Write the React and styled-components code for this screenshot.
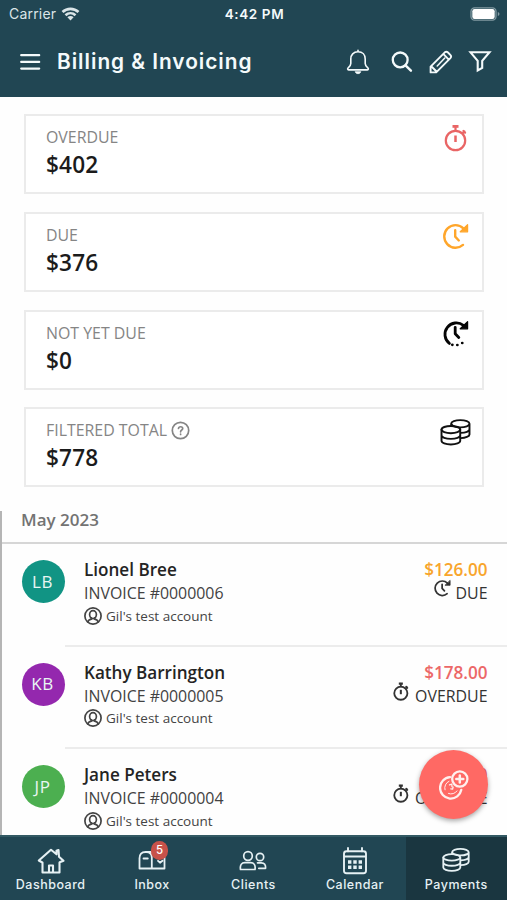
import React from 'react';
import styled, { createGlobalStyle } from 'styled-components';

const GlobalStyle = createGlobalStyle`
  * {
    box-sizing: border-box;
  }
  body {
    margin: 0;
    background: #fff;
  }
  p, h1, h2 {
    margin: 0;
  }
`;

const Screen = styled.div`
  position: relative;
  display: flex;
  flex-direction: column;
  width: 507px;
  height: 900px;
  overflow: hidden;
  background: #fefefe;
  color: #222;
  font-family: 'Open Sans', sans-serif;
`;

const Header = styled.header`
  flex: none;
  height: 97px;
  background: #214653;
  color: #f4fafb;
`;

const StatusBar = styled.div`
  display: grid;
  grid-template-columns: 1fr auto 1fr;
  align-items: center;
  height: 27px;
  padding: 0 7px 0 9px;
  font-family: Inter, sans-serif;
  font-size: 14px;
`;

const Carrier = styled.div`
  display: flex;
  align-items: center;
  gap: 5px;
  color: #dbe5e8;
  letter-spacing: 0.2px;
`;

const Clock = styled.div`
  font-size: 13.5px;
  font-weight: 600;
  letter-spacing: 0.6px;
`;

const Battery = styled.div`
  display: flex;
  justify-content: flex-end;
`;

const TitleBar = styled.div`
  display: flex;
  align-items: center;
  height: 70px;
  padding: 0 15px 0 20px;
`;

const Title = styled.h1`
  flex: 1;
  margin-left: 16px;
  font-family: Inter, sans-serif;
  font-size: 20.8px;
  font-weight: 600;
  line-height: 28px;
  letter-spacing: 0.98px;
`;

const Actions = styled.div`
  display: flex;
  align-items: center;
  gap: 15.5px;

  svg:first-child {
    margin-right: 6px;
  }
`;

const Summary = styled.section`
  flex: none;
  display: flex;
  flex-direction: column;
  gap: 17.8px;
  padding: 17px 23px 0 24px;
  height: 414px;
`;

const Card = styled.div`
  display: flex;
  justify-content: space-between;
  height: 80px;
  padding: 9px 11px 0 20px;
  border: 2px solid #ebebeb;
  background: #fff;
`;

const CardLabel = styled.p`
  display: flex;
  align-items: center;
  gap: 4px;
  height: 24px;
  color: #858585;
  font-size: 15.9px;
`;

const CardValue = styled.p`
  color: #1b1b1b;
  font-size: 22.6px;
  font-weight: 600;
  line-height: 32px;
  letter-spacing: 0.2px;
`;

const CardIcon = styled.div`
  display: flex;
  justify-content: center;
  width: 32px;
  margin-top: ${(p) => p.$top}px;
  color: ${(p) => p.$color};
`;

const List = styled.section`
  flex: 1;
  min-height: 0;
  border-left: 2px solid #b5b5b5;
`;

const Month = styled.h2`
  height: 33px;
  padding: 0 19px;
  border-bottom: 2px solid #d6d6d6;
  color: #737373;
  font-size: 17px;
  font-weight: 600;
  line-height: 18px;
`;

const Row = styled.div`
  display: flex;
  height: 102.7px;
  padding-left: 20px;
`;

const Avatar = styled.div`
  flex: none;
  display: flex;
  align-items: center;
  justify-content: center;
  width: 43px;
  height: 43px;
  margin-top: 16px;
  padding: 0 2px 1px 0;
  border-radius: 50%;
  background: ${(p) => p.$color};
  color: #e9f6f3;
  font-size: 17px;
  letter-spacing: 0.6px;
`;

const RowBody = styled.div`
  flex: 1;
  display: flex;
  justify-content: space-between;
  padding: 13px 19.5px 0 19px;
  border-bottom: 2px solid #ececec;
`;

const Name = styled.p`
  color: #242424;
  font-size: 17.1px;
  font-weight: 600;
  line-height: 25px;
`;

const Invoice = styled.p`
  color: #424242;
  font-size: 15.9px;
  line-height: 23px;
`;

const Account = styled.p`
  display: flex;
  align-items: center;
  gap: 4px;
  height: 21px;
  color: #444;
  font-size: 13.5px;
`;

const Right = styled.div`
  display: flex;
  flex-direction: column;
  align-items: flex-end;
`;

const Amount = styled.p`
  color: ${(p) => p.$color};
  font-size: 17.1px;
  font-weight: 600;
  line-height: 25px;
`;

const Status = styled.p`
  display: flex;
  gap: 5px;
  color: #333;
  font-size: 15.9px;
  line-height: 23px;

  svg {
    margin-top: -3px;
  }
`;

const Fab = styled.button`
  position: absolute;
  right: 19px;
  bottom: 81px;
  display: flex;
  align-items: center;
  justify-content: center;
  width: 69px;
  height: 69px;
  padding: 0;
  border: 0;
  border-radius: 50%;
  background: #ff6964;
  box-shadow: 0 2px 5px rgba(0, 0, 0, 0.35);
  color: #fff0ee;
`;

const Nav = styled.nav`
  position: relative;
  flex: none;
  display: grid;
  grid-template-columns: repeat(4, 101.4px) 1fr;
  height: 65px;
  border-top: 2px solid #335a64;
  background: #214653;
`;

const NavItem = styled.a`
  display: flex;
  flex-direction: column;
  align-items: center;
  padding: 9px 0 0;
  background: ${(p) => (p.$active ? '#1a3640' : 'transparent')};
  color: #e6f1f4;
  font-family: Inter, sans-serif;
  font-size: 12.5px;
  font-weight: 500;
  line-height: 18px;
  letter-spacing: 0.5px;
`;

const NavIcon = styled.div`
  position: relative;
  height: 30px;
  padding-top: 1px;
`;

const Badge = styled.span`
  position: absolute;
  top: -5px;
  right: -2px;
  width: 17px;
  height: 19px;
  border-radius: 9px;
  background: #c8524a;
  color: #fff;
  font-size: 11.5px;
  line-height: 19px;
  letter-spacing: 0;
  text-align: center;
`;

const Svg = ({ w = 30, h = w, box = `0 0 ${w} ${h}`, sw = 2, children }) => (
  <svg
    width={w}
    height={h}
    viewBox={box}
    fill="none"
    stroke="currentColor"
    strokeWidth={sw}
    strokeLinecap="round"
    strokeLinejoin="round"
  >
    {children}
  </svg>
);

const WifiIcon = () => (
  <Svg w={19} h={14} sw={2.7}>
    <path d="M1.5 5C6 .8 13 .8 17.5 5M4.5 8.2c2.9-2.6 7.1-2.6 10 0" strokeLinecap="butt" />
    <path d="M6.4 10.3c1.8-1.6 4.4-1.6 6.2 0L9.5 13.5z" fill="currentColor" stroke="none" />
  </Svg>
);

const BatteryIcon = () => (
  <Svg w={30} h={14} sw={1.3}>
    <rect x="1" y="0.8" width="25" height="12.4" rx="3.6" stroke="#839ba3" />
    <rect x="2.3" y="2.1" width="22.4" height="9.8" rx="2.2" fill="#fff" stroke="none" />
    <path d="M27.8 5v4q1.7-.5 1.7-2t-1.7-2z" fill="#839ba3" stroke="none" />
  </Svg>
);

const MenuIcon = () => (
  <Svg w={21} h={18} sw={2.2}>
    <path d="M1.2 2.2h18M1.2 8.9h18M1.2 15.6h18" />
  </Svg>
);

const BellIcon = () => (
  <Svg w={24} h={26} sw={1.6}>
    <path d="M12 1.3v1.5M12 2.8c-4.6 0-7.2 3.2-7.2 7.2v4.6c0 1.7-.8 2.9-2.6 4.3-.9.8-.7 2 .4 2h18.8c1.1 0 1.3-1.2.4-2-1.8-1.4-2.6-2.6-2.6-4.3V10c0-4-2.6-7.2-7.2-7.2z" />
    <path d="M9.3 23c.5 2.3 4.9 2.3 5.4 0z" fill="currentColor" strokeWidth="0.8" />
  </Svg>
);

const SearchIcon = () => (
  <Svg w={22} h={22} sw={2.3}>
    <circle cx="9.2" cy="8.9" r="7.4" />
    <path d="M14.5 14.4l5.4 5.2" strokeWidth="2.5" />
  </Svg>
);

const PencilIcon = () => (
  <Svg w={24} h={24} sw={1.9}>
    <path d="M1.6 22.4v-5.7L15.8 2.3q1.6-1.4 3.2.2l2.5 2.6q1.3 1.5-.1 3L7.2 22.4zM14.5 4.2l5 5.2M2.5 16.5l5 5" />
    <path d="M8.2 15.9l7.600-7.900" strokeWidth="1.5" />
  </Svg>
);

const FilterIcon = () => (
  <Svg w={24} h={22} sw={2.1}>
    <path d="M2.5 1.300h19l-7.300 8.600v7l-4.500 2.600v-9.600z" strokeLinejoin="miter" />
  </Svg>
);

const StopwatchIcon = ({ size = 28, sw = 2.2 }) => (
  <Svg w={size} box="0 0 28 28" sw={sw}>
    <circle cx="14.500" cy="16.5" r="9.7" />
    <path d="M14.500 11.5v6.5" strokeWidth={sw + 0.3} strokeLinecap="butt" />
    <path d="M11.500 2.4h6" strokeWidth={sw + 0.6} strokeLinecap="butt" />
    <path d="M14.500 2.5v4M21.700 9.300l1.800-1.800M22.400 7l1.700 1.700" />
  </Svg>
);

const ClockArrowIcon = ({ size = 28, dotted, sw = 2.4 }) => (
  <Svg w={size} box="0 0 28 28" sw={sw}>
    {dotted ? (
      <>
        <path d="M8.4 24.4A11.3 11.3 0 0 1 22.4 6.3" />
        <path d="M11.3 25.8h.1M16.3 26h.1M21.2 24h.1" strokeWidth="2.7" />
      </>
    ) : (
      <path d="M22.4 6.3A11.3 11.3 0 1 0 22 22.9" />
    )}
    <path d="M26.6 2.6v7.2h-7.4z" fill="currentColor" strokeWidth="1.2" />
    <path d="M14.2 8.3v6.4l3.6 3.8" />
  </Svg>
);

const CoinsIcon = ({ w = 31, h = 27, sw = 2 }) => (
  <Svg w={w} h={h} box="0 0 32 28" sw={sw}>
    <ellipse cx="11.2" cy="11" rx="9.7" ry="3.8" />
    <path d="M1.5 11v11.5c0 2.2 4.3 3.9 9.7 3.9s9.7-1.7 9.7-3.9V11M1.500 16.800c0 2.100 4.300 3.800 9.700 3.800s9.700-1.700 9.700-3.800" />
    <path d="M11.500 7V5c0-2.100 4.200-3.800 9.500-3.800S30.500 2.900 30.500 5v11c0 2-4 3.700-9 3.800M11.800 5.400C12.500 7.300 16.300 8.700 21 8.700c5.300 0 9.500-1.600 9.500-3.700M21.500 14.400c5-.1 9-1.700 9-3.700" />
  </Svg>
);

const HelpIcon = () => (
  <Svg w={19} sw={1.7}>
    <circle cx="9.500" cy="9.500" r="8.200" />
    <path d="M7.500 7.500c.2-2.400 4.200-2.300 4.200 0 0 1.600-2.100 1.500-2.100 3.300M9.600 13.200v.2" />
  </Svg>
);

const AccountIcon = () => (
  <Svg w={18} sw={1.7}>
    <circle cx="9" cy="9" r="8.100" />
    <ellipse cx="9" cy="7.600" rx="3.400" ry="4" />
    <path d="M3.800 15c.4-1.700 1.500-2.400 3.600-2.800v-1.300M14.200 15c-.4-1.700-1.500-2.400-3.600-2.800v-1.300" />
  </Svg>
);

const AddPaymentIcon = () => (
  <Svg w={30} h={30} sw={2.3}>
    <path d="M11 7.200A10.700 10.700 0 1 0 22.300 19.800" />
    <path d="M10 11.300a7 7 0 0 0-4 8.500M9.500 23.500a7 7 0 0 0 8.500-2.600" strokeWidth="1" />
    <path d="M10.500 14.800l2.300-.6.2 2.500M11.800 18.800l1.800.3.500-2" strokeWidth="1.300" />
    <circle cx="20.800" cy="9" r="7.600" />
    <path d="M20.800 5.500v7M17.300 9h7" strokeWidth="2.500" />
  </Svg>
);

const HomeIcon = () => (
  <Svg w={28} h={27} sw={2.1}>
    <path d="M5.500 15.500v10h17v-10M5.300 15.500l-3.500-2L14 2.800l5.500 4.500V3.800l2-.8.500 6.700 4.500 4-3.800 1.600M12 25.500v-7h4v7" />
  </Svg>
);

const MailboxIcon = () => (
  <Svg w={28} h={27} sw={1.8}>
    <path d="M1.500 21.500V11.300c0-4 2-6.300 6-6.300h13c4 0 6 2.300 6 6.300v10.200zM13.800 21.500V10.500c0-3.500-2.300-5.500-5.500-5.500M5.500 11.500h4.300M20 13.800l2 1.900 2.500-2" />
  </Svg>
);

const ClientsIcon = () => (
  <Svg w={28} h={27} sw={1.7}>
    <circle cx="9" cy="9" r="4.300" />
    <path d="M1.500 22.500c-.7-4.600 1-6.800 4.500-6.800h5.500c3.500 0 5.200 2.200 4.500 6.800z" />
    <circle cx="21" cy="10" r="3.700" />
    <path d="M18.500 15.800h3.700c3.300 0 4.600 1.900 4.400 5.500h-6.800" />
  </Svg>
);

const CalendarIcon = () => (
  <Svg w={28} h={28} sw={1.9}>
    <path d="M5.500 4.300h17c1.600 0 2.500.9 2.500 2.500v17c0 1.600-.9 2.500-2.500 2.500h-17c-1.600 0-2.500-.9-2.500-2.500v-17c0-1.600.9-2.500 2.500-2.500zM3 9.500h22M7 1v3.500M21 1v3.500" />
    <path
      d="M7 15h3.400M12.300 15h3.400M17.600 15H21M7 20.300h3.400M12.300 20.300h3.400M17.600 20.300H21"
      strokeWidth="3.5"
      strokeLinecap="butt"
    />
  </Svg>
);

const cards = [
  { label: 'OVERDUE', value: '$402', color: '#e96565', icon: <StopwatchIcon />, top: -1 },
  { label: 'DUE', value: '$376', color: '#ffa62b', icon: <ClockArrowIcon />, top: -1 },
  { label: 'NOT YET DUE', value: '$0', color: '#050505', icon: <ClockArrowIcon dotted sw={2.8} />, top: -2 },
  { label: 'FILTERED TOTAL', value: '$778', color: '#111', icon: <CoinsIcon />, help: true, top: 1 },
];

const invoices = [
  { initials: 'LB', color: '#119484', name: 'Lionel Bree', number: '0000006', amount: '$126.00', status: 'DUE' },
  { initials: 'KB', color: '#9428ae', name: 'Kathy Barrington', number: '0000005', amount: '$178.00', status: 'OVERDUE' },
  { initials: 'JP', color: '#4caf50', name: 'Jane Peters', number: '0000004', amount: '$98.00', status: 'OVERDUE' },
];

const tabs = [
  { label: 'Dashboard', icon: <HomeIcon /> },
  { label: 'Inbox', icon: <MailboxIcon />, badge: 5 },
  { label: 'Clients', icon: <ClientsIcon /> },
  { label: 'Calendar', icon: <CalendarIcon /> },
  { label: 'Payments', icon: <CoinsIcon w={28} h={26} sw={2.1} />, active: true },
];

function App() {
  return (
    <Screen>
      <GlobalStyle />
      <Header>
        <StatusBar>
          <Carrier>
            Carrier <WifiIcon />
          </Carrier>
          <Clock>4:42 PM</Clock>
          <Battery>
            <BatteryIcon />
          </Battery>
        </StatusBar>
        <TitleBar>
          <MenuIcon />
          <Title>Billing &amp; Invoicing</Title>
          <Actions>
            <BellIcon />
            <SearchIcon />
            <PencilIcon />
            <FilterIcon />
          </Actions>
        </TitleBar>
      </Header>

      <Summary>
        {cards.map((card) => (
          <Card key={card.label}>
            <div>
              <CardLabel>
                {card.label}
                {card.help && <HelpIcon />}
              </CardLabel>
              <CardValue>{card.value}</CardValue>
            </div>
            <CardIcon $color={card.color} $top={card.top}>
              {card.icon}
            </CardIcon>
          </Card>
        ))}
      </Summary>

      <List>
        <Month>May 2023</Month>
        {invoices.map((item) => (
          <Row key={item.number}>
            <Avatar $color={item.color}>{item.initials}</Avatar>
            <RowBody>
              <div>
                <Name>{item.name}</Name>
                <Invoice>INVOICE #{item.number}</Invoice>
                <Account>
                  <AccountIcon /> Gil's test account
                </Account>
              </div>
              <Right>
                <Amount $color={item.status === 'DUE' ? '#f8a52c' : '#ec6868'}>{item.amount}</Amount>
                <Status>
                  {item.status === 'DUE' ? <ClockArrowIcon size={18} sw={2.7} /> : <StopwatchIcon size={19} sw={2.7} />}
                  {item.status}
                </Status>
              </Right>
            </RowBody>
          </Row>
        ))}
      </List>

      <Nav>
        {tabs.map((tab) => (
          <NavItem key={tab.label} $active={tab.active}>
            <NavIcon>
              {tab.icon}
              {tab.badge && <Badge>{tab.badge}</Badge>}
            </NavIcon>
            {tab.label}
          </NavItem>
        ))}
      </Nav>

      <Fab aria-label="Add payment">
        <AddPaymentIcon />
      </Fab>
    </Screen>
  );
}

export default App;
